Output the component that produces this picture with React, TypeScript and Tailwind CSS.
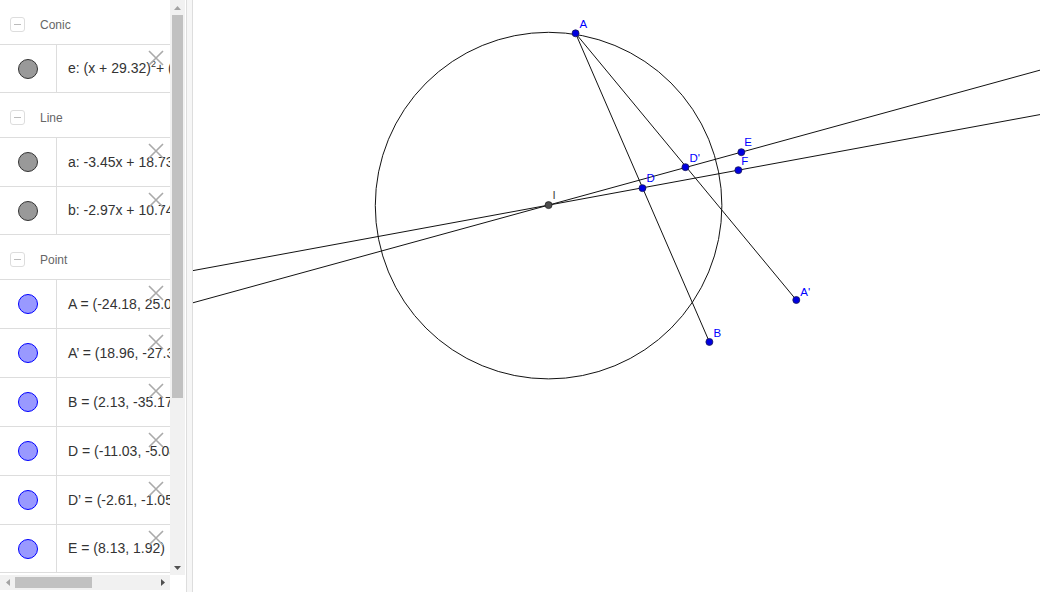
import React from 'react';

type Item = { text: React.ReactNode; kind: 'gray' | 'blue' };
type Group = { title: string; items: Item[] };

const GROUPS: Group[] = [
  {
    title: 'Conic',
    items: [
      {
        kind: 'gray',
        text: (
          <>
            e: (x + 29.32)<sup className="text-[9px]">2</sup> + (y − 8.61)<sup className="text-[9px]">2</sup> = 1225.13
          </>
        ),
      },
    ],
  },
  {
    title: 'Line',
    items: [
      { kind: 'gray', text: 'a: -3.45x + 18.73y = 24.9' },
      { kind: 'gray', text: 'b: -2.97x + 10.74y = 18.1' },
    ],
  },
  {
    title: 'Point',
    items: [
      { kind: 'blue', text: 'A = (-24.18, 25.09)' },
      { kind: 'blue', text: 'A’ = (18.96, -27.31)' },
      { kind: 'blue', text: 'B = (2.13, -35.17)' },
      { kind: 'blue', text: 'D = (-11.03, -5.08)' },
      { kind: 'blue', text: 'D’ = (-2.61, -1.05)' },
      { kind: 'blue', text: 'E = (8.13, 1.92)' },
    ],
  },
];

const PTS = [
  { n: 'A', x: 575, y: 33, lx: 579, ly: 28 },
  { n: "D'", x: 685, y: 167, lx: 689, ly: 162 },
  { n: 'D', x: 642, y: 188, lx: 646, ly: 182 },
  { n: 'E', x: 741, y: 152, lx: 744, ly: 146 },
  { n: 'F', x: 738, y: 170, lx: 741, ly: 165 },
  { n: "A'", x: 796, y: 300, lx: 800, ly: 296 },
  { n: 'B', x: 709, y: 342, lx: 713, ly: 337 },
];

function Marker({ kind }: { kind: 'gray' | 'blue' }) {
  return kind === 'gray' ? (
    <div className="w-[20px] h-[20px] rounded-full bg-[#999999] border border-[#333333]" />
  ) : (
    <div className="w-[20px] h-[20px] rounded-full bg-[#9999ff] border border-[#0000ff]" />
  );
}

function DeleteX() {
  return (
    <svg className="absolute left-[148px] top-[5px]" width="16" height="16" viewBox="0 0 16 16">
      <path d="M1 1 L15 15 M15 1 L1 15" stroke="#aaaaaa" strokeWidth="1.6" />
    </svg>
  );
}

function AlgebraView() {
  return (
    <div className="relative w-[170px] h-[575px] overflow-hidden bg-white">
      {GROUPS.map((g) => (
        <div key={g.title}>
          <div className="h-[44px] pt-[5px] flex items-center">
            <div className="ml-[10px] w-[15px] h-[15px] rounded-[3px] border border-[#dddddd] flex items-center justify-center">
              <div className="w-[7px] h-[1px] bg-[#bbbbbb]" />
            </div>
            <span className="ml-[15px] text-[12px] text-[#666666]">{g.title}</span>
          </div>
          {g.items.map((it, i) => (
            <div
              key={i}
              className={`relative h-[49px] flex border-t border-[#dddddd] ${i === g.items.length - 1 ? 'border-b' : ''}`}
            >
              <div className="w-[57px] shrink-0 border-r border-[#dddddd] flex items-center justify-center">
                <Marker kind={it.kind} />
              </div>
              <div className="pl-[11px] flex items-center whitespace-nowrap text-[14px] text-[#333333]">{it.text}</div>
              <DeleteX />
            </div>
          ))}
        </div>
      ))}
    </div>
  );
}

function VScroll() {
  return (
    <div className="w-[15px] h-[575px] bg-[#f1f1f1] flex flex-col items-center">
      <div className="h-[15px] flex items-center justify-center">
        <svg width="7" height="4" viewBox="0 0 7 4">
          <path d="M0 4 L3.5 0 L7 4 Z" fill="#a3a3a3" />
        </svg>
      </div>
      <div className="w-[11px] h-[383px] bg-[#c1c1c1]" />
      <div className="flex-1" />
      <div className="h-[15px] flex items-center justify-center">
        <svg width="7" height="4" viewBox="0 0 7 4">
          <path d="M0 0 L7 0 L3.5 4 Z" fill="#505050" />
        </svg>
      </div>
    </div>
  );
}

function HScroll() {
  return (
    <div className="flex h-[15px]">
      <div className="w-[170px] bg-[#f1f1f1] flex items-center">
        <div className="w-[15px] flex justify-center">
          <svg width="4" height="7" viewBox="0 0 4 7">
            <path d="M4 0 L0 3.5 L4 7 Z" fill="#a3a3a3" />
          </svg>
        </div>
        <div className="w-[77px] h-[11px] bg-[#c1c1c1]" />
        <div className="flex-1" />
        <div className="w-[15px] flex justify-center">
          <svg width="4" height="7" viewBox="0 0 4 7">
            <path d="M0 0 L4 3.5 L0 7 Z" fill="#505050" />
          </svg>
        </div>
      </div>
      <div className="w-[15px] bg-white" />
    </div>
  );
}

function Graphics() {
  const I = { x: 548, y: 205 };
  const lineY = (px: number, py: number, x: number) => I.y + ((py - I.y) / (px - I.x)) * (x - I.x);
  return (
    <div className="flex-1 h-[592px] bg-white">
      <svg width="100%" height="592" viewBox="192 0 848 592">
        <circle cx={548} cy={205.5} r={173.5} fill="none" stroke="#111111" strokeWidth="1" />
        <line x1={192} y1={lineY(741, 152, 192)} x2={1040} y2={lineY(741, 152, 1040)} stroke="#111111" strokeWidth="1" />
        <line x1={192} y1={lineY(738, 170, 192)} x2={1040} y2={lineY(738, 170, 1040)} stroke="#111111" strokeWidth="1" />
        <line x1={575} y1={33} x2={709} y2={342} stroke="#111111" strokeWidth="1" />
        <line x1={575} y1={33} x2={796} y2={300} stroke="#111111" strokeWidth="1" />
        <circle cx={I.x} cy={I.y} r={3.5} fill="#4d4d4d" stroke="#222222" strokeWidth="0.8" />
        <text x={552} y={199} fontSize="11.5" fill="#444444" fontFamily="'Liberation Sans', sans-serif">
          I
        </text>
        {PTS.map((p) => (
          <g key={p.n}>
            <circle cx={p.x} cy={p.y} r={3.5} fill="#0000e0" stroke="#1a1a55" strokeWidth="0.8" />
            <text x={p.lx} y={p.ly} fontSize="11.5" fill="#0000ff" fontFamily="'Liberation Sans', sans-serif">
              {p.n}
            </text>
          </g>
        ))}
      </svg>
    </div>
  );
}

export default function App() {
  return (
    <div className="w-[1040px] h-[592px] flex overflow-hidden bg-white font-['Liberation_Sans',sans-serif]">
      <div className="flex flex-col w-[185px]">
        <div className="flex">
          <AlgebraView />
          <VScroll />
        </div>
        <HScroll />
      </div>
      <div className="w-[7px] h-[592px] ml-[1px] bg-[#f6f6f6] border-l border-r border-[#dddddd]" />
      <Graphics />
    </div>
  );
}
